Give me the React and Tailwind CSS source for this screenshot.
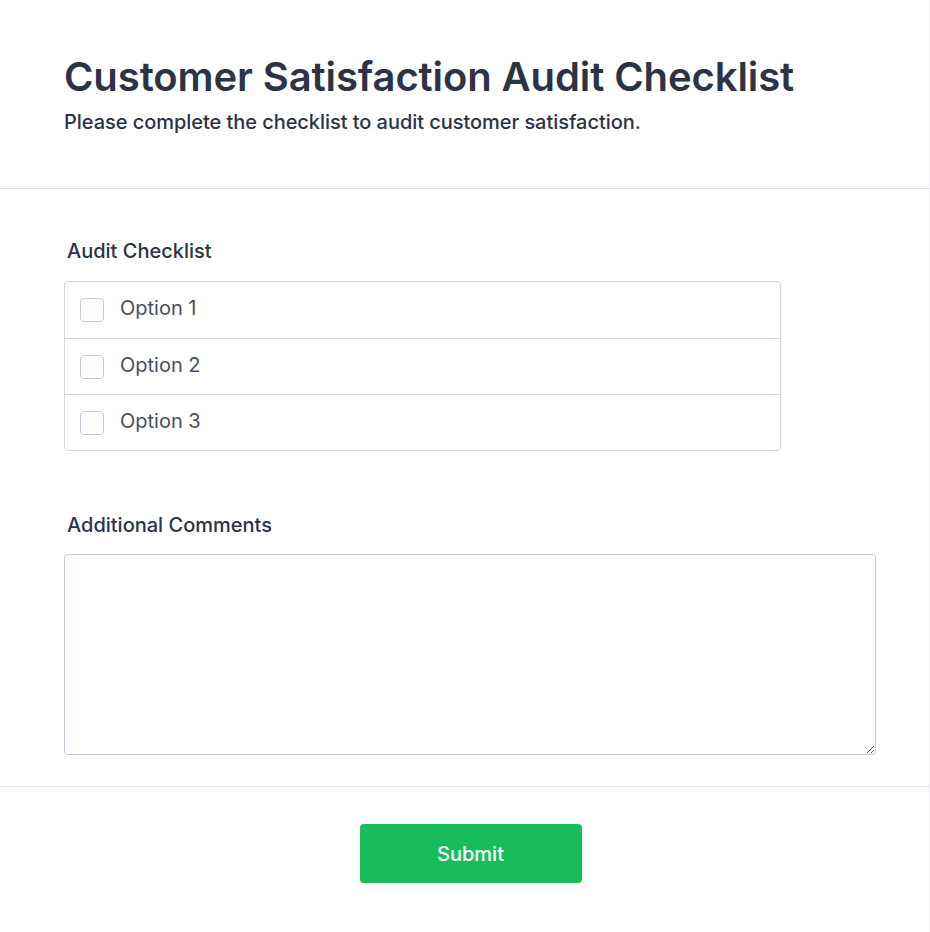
export default function App() {
  const options = ["Option 1", "Option 2", "Option 3"];
  return (
    <div className="min-h-[932px] bg-white border-r border-[#eef0f5] font-['Inter','Liberation_Sans',sans-serif] text-[#2c3345]">
      <div className="px-16 pt-[53px] pb-[52px] border-b border-[#dfe1e7]">
        <h1 className="text-[40px] leading-[48px] font-semibold tracking-[-0.1px]">Customer Satisfaction Audit Checklist</h1>
        <p className="text-[20px] leading-[28px] font-medium mt-[7px] tracking-[-0.05px]">Please complete the checklist to audit customer satisfaction.</p>
      </div>
      <div className="px-16 pt-[48px] pb-[31px] border-b border-[#eaebf2]">
        <label className="block pl-[3px] text-[20px] leading-[28px] font-medium">Audit Checklist</label>
        <div className="mt-[16px] w-[717px] border border-[#d3d5dc] rounded-[4px]">
          {options.map((o, i) => (
            <label key={o} className={`flex items-center h-[56px] pl-[15px] ${i > 0 ? "border-t border-[#d3d5dc]" : ""}`}>
              <span className="w-6 h-6 border border-[#c3cad8] rounded-[4px] bg-white" />
              <span className="ml-4 pb-1 text-[20px] text-[#4a4f5e]">{o}</span>
            </label>
          ))}
        </div>
        <label className="block pl-[3px] mt-[60px] text-[20px] leading-[28px] font-medium">Additional Comments</label>
        <textarea className="block mt-[15px] w-[812px] h-[201px] border border-[#c3cad8] rounded-[4px] p-3 text-[16px] outline-none" />
      </div>
      <div className="flex justify-center pt-[37px] pl-3">
        <button className="w-[222px] h-[59px] bg-[#18bd5b] rounded-[4px] text-white text-[20px] font-medium">Submit</button>
      </div>
    </div>
  );
}
